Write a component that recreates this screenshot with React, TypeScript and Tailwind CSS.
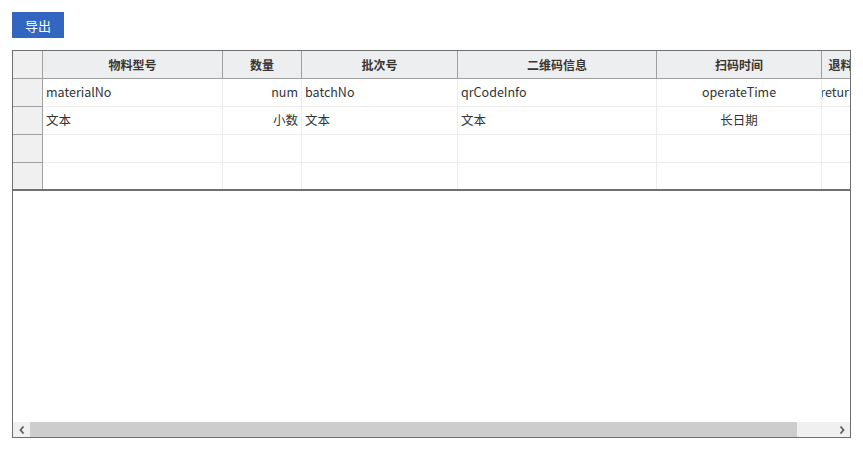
import React from "react";

const columns = [
  { title: "物料型号", w: "w-[180px]", field: "materialNo", type: "文本", align: "justify-start" },
  { title: "数量", w: "w-[79px]", field: "num", type: "小数", align: "justify-end" },
  { title: "批次号", w: "w-[156px]", field: "batchNo", type: "文本", align: "justify-start" },
  { title: "二维码信息", w: "w-[199px]", field: "qrCodeInfo", type: "文本", align: "justify-start" },
  { title: "扫码时间", w: "w-[165px]", field: "operateTime", type: "长日期", align: "justify-center" },
  { title: "退料数量", w: "w-[62px]", field: "returnNum", type: "", align: "justify-center" },
];

const font = { fontFamily: '"Noto Sans CJK SC", "Noto Sans", sans-serif' };

const App = () => {
  const rows = [
    columns.map((c) => c.field),
    columns.map((c) => c.type),
    columns.map(() => ""),
    columns.map(() => ""),
  ];

  return (
    <div className="w-[863px] h-[450px] bg-white text-[#333]" style={font}>
      <div className="pt-[12px] pl-[12px]">
        <button className="w-[52px] h-[26px] bg-[#3366c0] text-white text-[13px] leading-none flex items-center justify-center">
          导出
        </button>
      </div>

      <div className="ml-[12px] mt-[12px] w-[839px] h-[388px] border border-[#6e6e6e] flex flex-col overflow-hidden">
        <div className="flex-1 overflow-hidden">
          {/* header */}
          <div className="flex h-[28px] bg-[#edeef0] border-b border-[#a0a0a0] w-max">
            <div className="w-[30px] shrink-0 border-r border-[#a0a0a0] bg-[#f0f0f0]" />
            {columns.map((c, i) => (
              <div
                key={`h-${i}`}
                className={`${c.w} shrink-0 border-r border-[#a0a0a0] flex items-center justify-center text-[12px] font-bold text-[#3a3530] overflow-hidden whitespace-nowrap`}
              >
                {c.title}
              </div>
            ))}
          </div>

          {/* body rows */}
          {rows.map((r, ri) => {
            const last = ri === rows.length - 1;
            return (
              <div
                key={`r-${ri}`}
                className={`flex h-[28px] w-max ${last ? "border-b-2 border-[#707070]" : "border-b border-[#ececec]"}`}
              >
                <div
                  className={`w-[30px] shrink-0 border-r border-[#a0a0a0] bg-[#f0f0f0] ${last ? "" : "-mb-px border-b border-b-[#a0a0a0]"}`}
                />
                {columns.map((c, ci) => (
                  <div
                    key={`c-${ri}-${ci}`}
                    className={`${c.w} shrink-0 border-r border-[#ececec] flex items-center ${c.align} px-[3px] text-[12.5px] overflow-hidden whitespace-nowrap`}
                  >
                    {r[ci]}
                  </div>
                ))}
              </div>
            );
          })}
        </div>

        {/* horizontal scrollbar */}
        <div className="h-[15px] bg-[#f0f0f0] flex items-center">
          <div className="w-[17px] h-full flex items-center justify-center">
            <svg width="6" height="8" viewBox="0 0 6 8">
              <path d="M4.5 0.5 L1.5 4 L4.5 7.5" stroke="#606060" strokeWidth="1.8" fill="none" />
            </svg>
          </div>
          <div className="w-[767px] h-full bg-[#cdcdcd]" />
          <div className="flex-1" />
          <div className="w-[17px] h-full flex items-center justify-center">
            <svg width="6" height="8" viewBox="0 0 6 8">
              <path d="M1.5 0.5 L4.5 4 L1.5 7.5" stroke="#606060" strokeWidth="1.8" fill="none" />
            </svg>
          </div>
        </div>
      </div>
    </div>
  );
};

export default App;
